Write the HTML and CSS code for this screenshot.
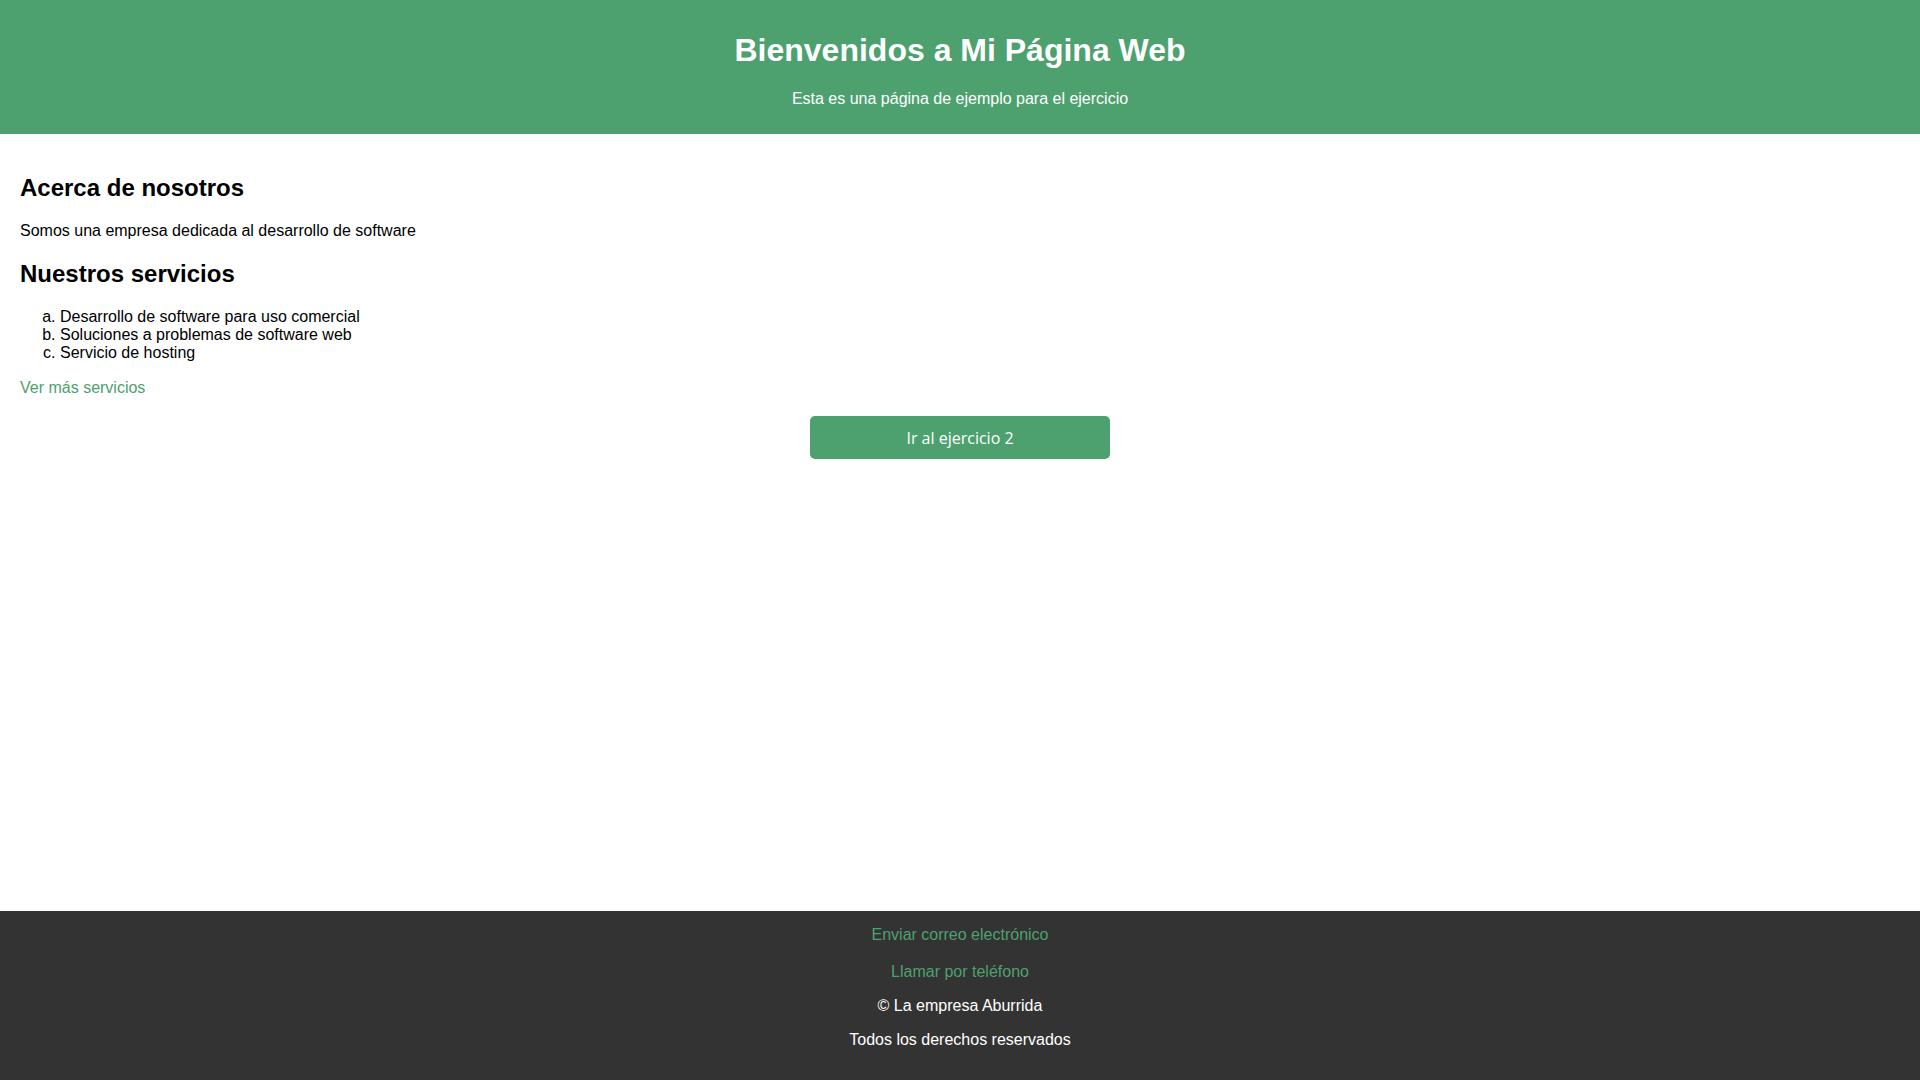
FILE: index.html
```html
<!DOCTYPE html>
<html lang="es">
<head>
<meta charset="utf-8">
<title>Mi Página Web</title>
<link rel="stylesheet" href="styles.css">
</head>
<body>
<header class="site-header">
  <h1 class="site-title">Bienvenidos a Mi Página Web</h1>
  <p class="site-subtitle">Esta es una página de ejemplo para el ejercicio</p>
</header>
<main class="content">
  <section class="about">
    <h2 class="section-title">Acerca de nosotros</h2>
    <p class="text">Somos una empresa dedicada al desarrollo de software</p>
  </section>
  <section class="services">
    <h2 class="section-title">Nuestros servicios</h2>
    <ol class="service-list" type="a">
      <li>Desarrollo de software para uso comercial</li>
      <li>Soluciones a problemas de software web</li>
      <li>Servicio de hosting</li>
    </ol>
    <p class="text more"><a class="link" href="#">Ver más servicios</a></p>
  </section>
  <button class="btn" type="button">Ir al ejercicio 2</button>
</main>
<footer class="site-footer">
  <a class="footer-link first" href="#">Enviar correo electrónico</a>
  <a class="footer-link" href="#">Llamar por teléfono</a>
  <p class="footer-text">© La empresa Aburrida</p>
  <p class="footer-text">Todos los derechos reservados</p>
</footer>
</body>
</html>
```
FILE: styles.css
```css
html, body {
  height: 100%;
}
body {
  margin: 0;
  font-family: "Liberation Sans", Arial, sans-serif;
  font-size: 16px;
  color: #000;
  background: #fff;
  display: flex;
  flex-direction: column;
  min-height: 100vh;
}
.site-header {
  background: #4da16f;
  color: #fff;
  text-align: center;
  padding: 10px 0;
}
.site-title {
  font-size: 32px;
  font-weight: bold;
  margin: 22px 0 21px;
}
.site-subtitle {
  margin: 16px 0;
}
.content {
  flex: 1;
  padding: 20px;
}
.section-title {
  font-size: 24px;
  font-weight: bold;
  margin: 19.92px 0;
}
.text {
  margin: 16px 0;
}
.text.more {
  margin-top: 17px;
  margin-bottom: 16px;
}
.service-list {
  margin: 16px 0;
  padding-left: 40px;
}
.link {
  color: #4da16f;
  text-decoration: none;
}
.btn {
  display: block;
  width: 300px;
  height: 43px;
  margin: 19px auto 20px;
  padding: 2px 0 0;
  border: 0;
  border-radius: 5px;
  background: #4da16f;
  color: #fff;
  font-family: "Open Sans", "Noto Sans", sans-serif;
  font-size: 16px;
  cursor: pointer;
}
.site-footer {
  background: #333;
  color: #fff;
  text-align: center;
  padding: 15px 0;
}
.footer-link {
  display: block;
  color: #4da16f;
  text-decoration: none;
}
.footer-link.first {
  margin-bottom: 19px;
}
.footer-text {
  margin: 16px 0;
}
```
